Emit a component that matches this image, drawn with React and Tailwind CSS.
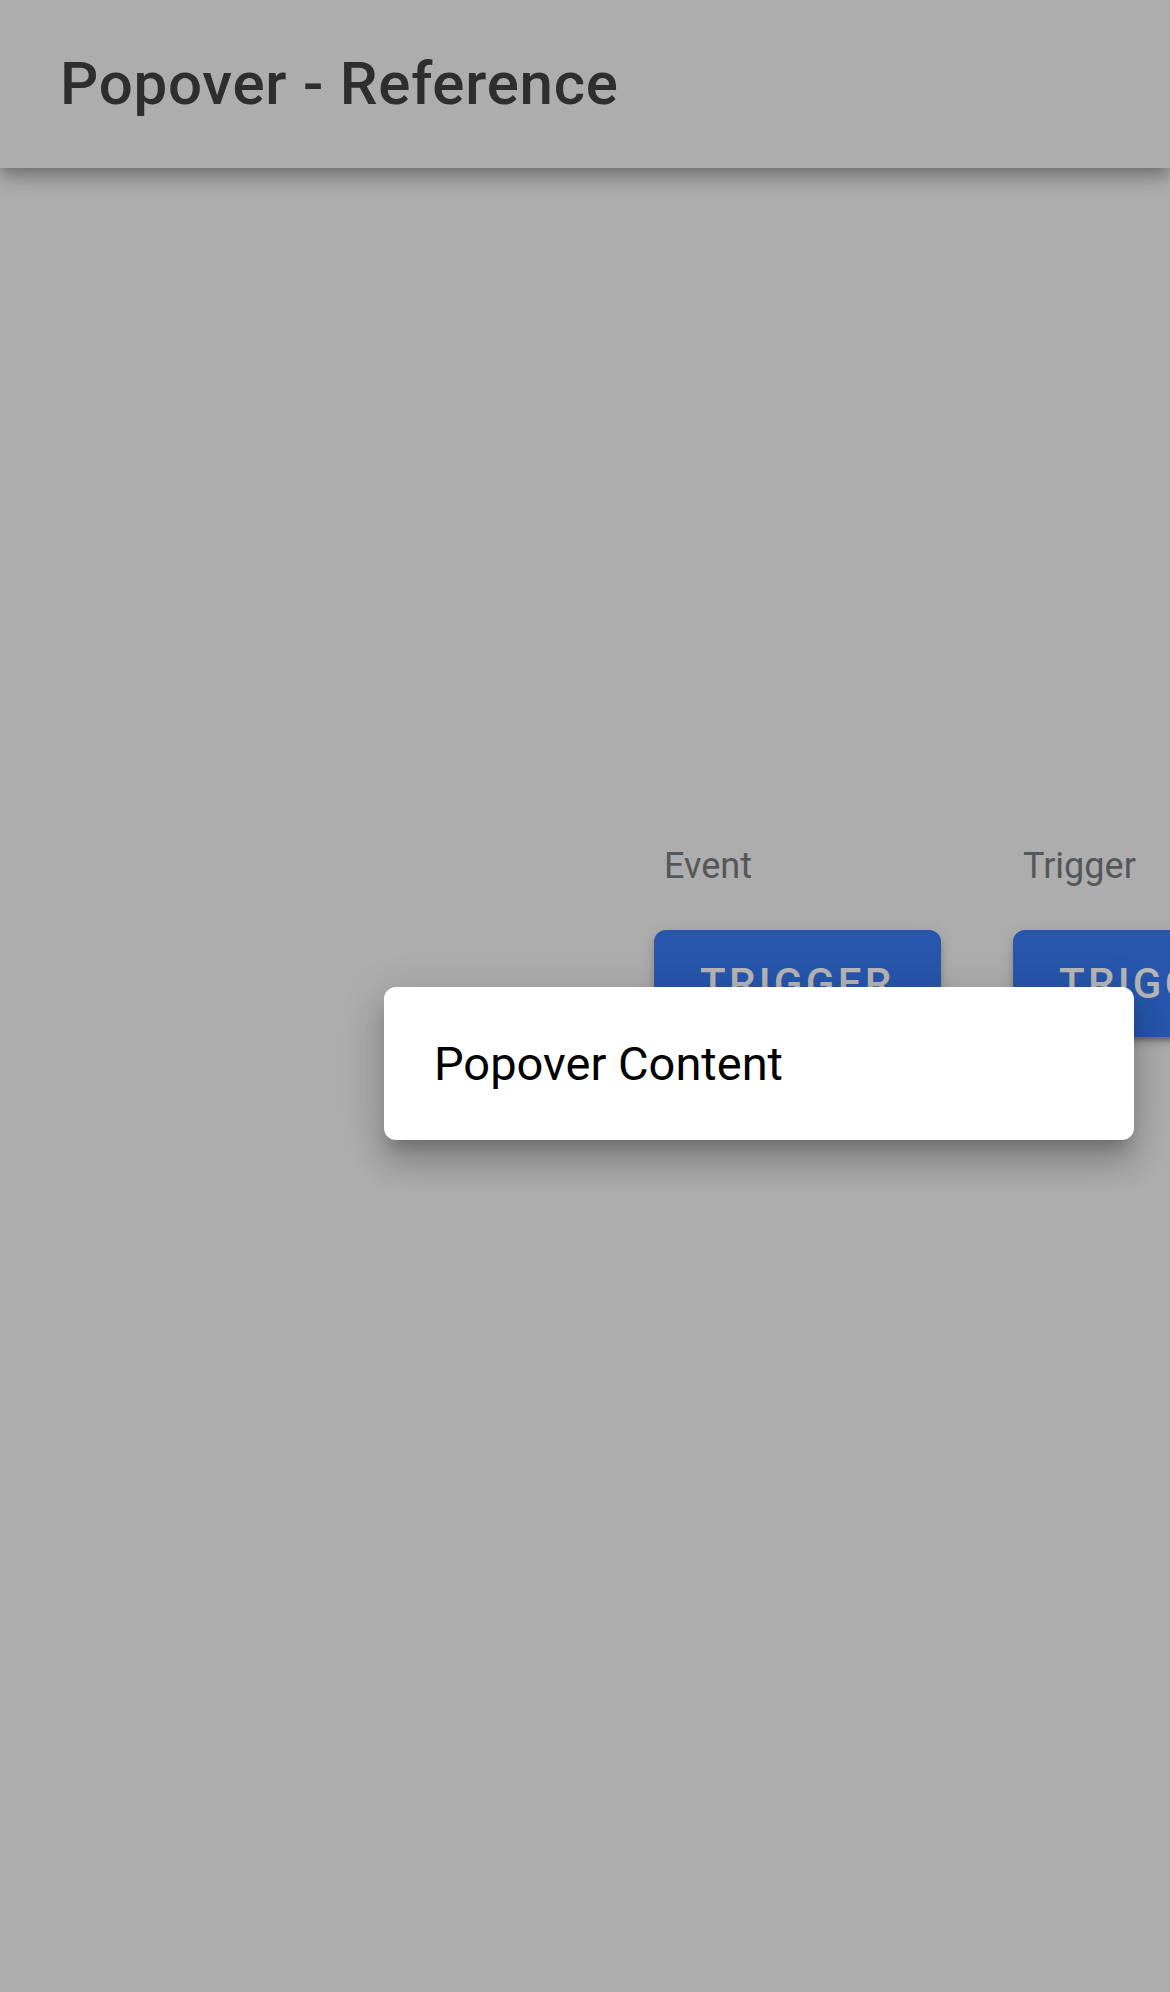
export default function App() {
  return (
    <div
      className="relative w-[1170px] h-[1992px] overflow-hidden bg-[#adadad]"
      style={{ fontFamily: "Roboto, 'Noto Sans', Arial, sans-serif" }}
    >
      <header className="relative z-10 h-[168px] flex items-center pl-[60px] bg-[#adadad] shadow-[0_6px_12px_-3px_rgba(0,0,0,0.2),0_12px_15px_0_rgba(0,0,0,0.14),0_3px_30px_0_rgba(0,0,0,0.12)]">
        <h1 className="text-[60px] font-medium tracking-[0.75px] text-[#2e2e2e] leading-none">Popover - Reference</h1>
      </header>
      <main className="flex gap-[72px] pl-[654px] pt-[677px]">
        {["Event", "Trigger"].map((label) => (
          <div key={label} className="flex flex-col shrink-0">
            <div className="ml-[10px] h-[43px] leading-[43px] text-[36px] text-[#54575a]">{label}</div>
            <button className="mt-[42px] w-[287px] h-[107px] shrink-0 rounded-[12px] bg-[#2756ac] pl-[46px] text-left text-[42px] font-medium uppercase tracking-[3.3px] text-[#b6b6b6] shadow-[0_9px_3px_-6px_rgba(0,0,0,0.2),0_6px_6px_0_rgba(0,0,0,0.14),0_3px_15px_0_rgba(0,0,0,0.12)]">
              Trigger
            </button>
          </div>
        ))}
      </main>
      <div className="absolute left-[384px] top-[987px] w-[750px] h-[153px] rounded-[12px] bg-white flex items-center pl-[50px] shadow-[0_15px_15px_-9px_rgba(0,0,0,0.2),0_24px_30px_3px_rgba(0,0,0,0.14),0_9px_42px_6px_rgba(0,0,0,0.12)]">
        <span className="text-[47px] text-black leading-none">Popover Content</span>
      </div>
    </div>
  );
}
